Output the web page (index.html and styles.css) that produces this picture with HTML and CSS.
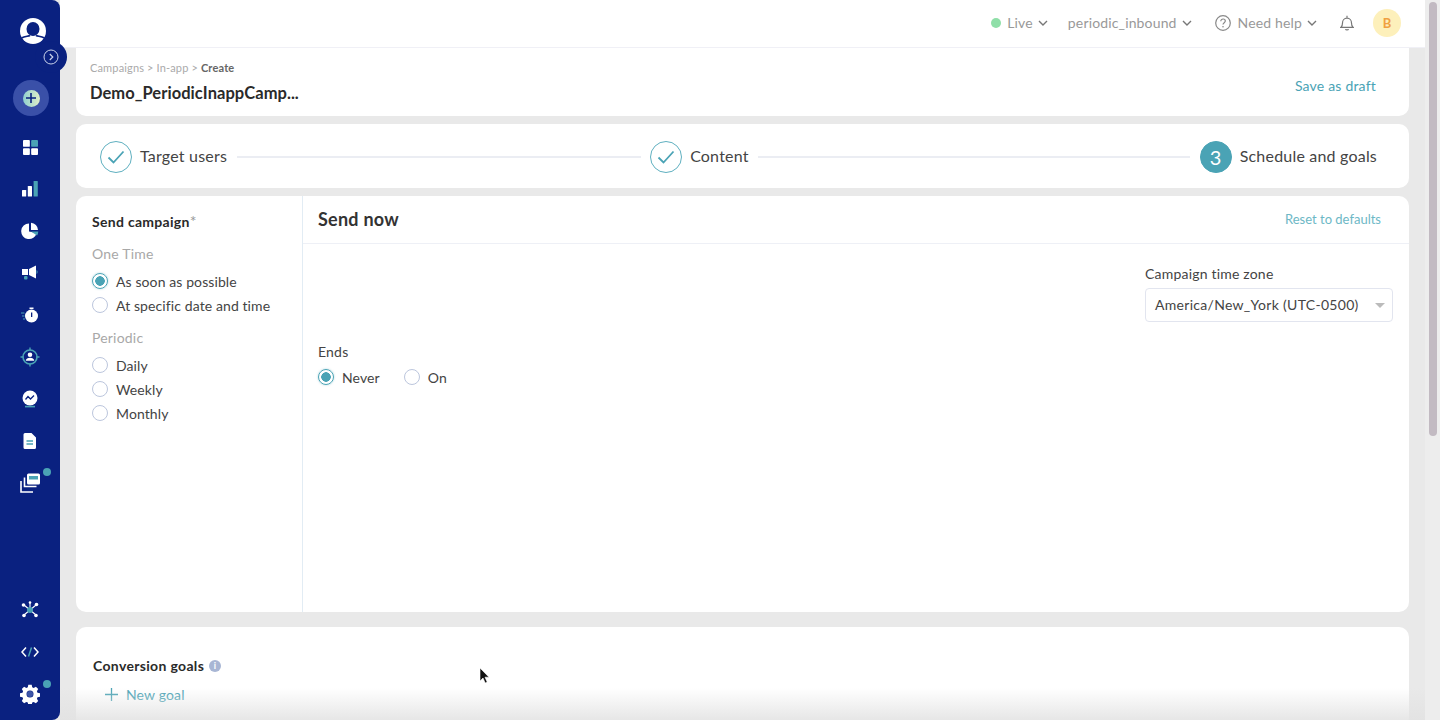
FILE: index.html
```html
<!DOCTYPE html>
<html lang="en">
<head>
  <meta charset="UTF-8">
  <title>Create campaign</title>
  <link rel="stylesheet" href="styles.css">
</head>
<body>
  <div class="app">
    <!-- Left navigation -->
    <aside class="sidebar">
      <div class="logo">
        <svg width="26" height="26" viewBox="0 0 26 26"><circle cx="13" cy="13" r="13" fill="#fff"/><ellipse cx="13" cy="11" rx="6.500" ry="7" fill="#0a2180"/><path d="M1.500 20c3.500-2 6.500-1.500 8.500-2.500M24.500 20c-3.500-2-6.500-1.500-8.500-2.500" fill="none" stroke="#0a2180" stroke-width="1.600"/></svg>
      </div>
      <div class="add-btn">
        <span class="add-inner">
          <svg width="10" height="10" viewBox="0 0 10 10"><path d="M5 0v10M0 5h10" stroke="#0a2180" stroke-width="1.600"/></svg>
        </span>
      </div>
      <nav class="nav-list">
        <a class="nav-item">
          <svg width="15" height="15" viewBox="0 0 16 16"><rect width="7.300" height="7.300" rx="1" fill="#fff"/><rect x="8.700" width="7.300" height="7.300" rx="1" fill="#4aa3b5"/><rect y="8.700" width="7.300" height="7.300" rx="1" fill="#fff"/><rect x="8.700" y="8.700" width="7.300" height="7.300" rx="1" fill="#fff"/></svg>
        </a>
        <a class="nav-item">
          <svg width="16" height="16" viewBox="0 0 16 16"><rect y="9" width="4.200" height="6.500" rx=".6" fill="#fff"/><rect x="5.800" y="5" width="4.200" height="10.500" rx=".6" fill="#fff"/><rect x="11.600" y="0" width="4.200" height="15.500" rx=".6" fill="#4aa3b5"/></svg>
        </a>
        <a class="nav-item">
          <svg width="18" height="18" viewBox="0 0 18 18"><path d="M8 1.500a7.800 7.800 0 1 0 7.600 9.500L8 9.500z" fill="#fff"/><path d="M10 .8V8l7 0A7.400 7.400 0 0 0 10 .8z" fill="#fff"/><path d="M10 9.500l7.300 0a7.400 7.400 0 0 1-1.300 4z" fill="#4aa3b5"/></svg>
        </a>
        <a class="nav-item">
          <svg width="18" height="18" viewBox="0 0 18 18"><rect x="1" y="5" width="6" height="6" fill="#fff"/><path d="M8 5l7-3.500v13L8 11z" fill="#fff"/><path d="M15.500 6c1.500.6 1.500 3.400 0 4z" fill="#4aa3b5"/><rect x="3" y="12" width="3.500" height="3.500" rx="1" fill="#4aa3b5"/></svg>
        </a>
        <a class="nav-item">
          <svg width="18" height="18" viewBox="0 0 18 18"><circle cx="10.500" cy="10" r="6.500" fill="#fff"/><rect x="8.500" y="1.500" width="4" height="1.500" fill="#fff"/><rect x="10" y="6.500" width="1.300" height="4.500" fill="#0a2180"/><path d="M0 7h3.500M1 10h2.500M2 13h2" stroke="#4aa3b5" stroke-width="1.200"/></svg>
        </a>
        <a class="nav-item">
          <svg width="20" height="20" viewBox="0 0 20 20"><circle cx="10" cy="10" r="7" fill="none" stroke="#4aa3b5" stroke-width="1.600"/><path d="M10 .5v3M10 16.500v3M.5 10h3M16.500 10h3" stroke="#4aa3b5" stroke-width="1.400"/><circle cx="10" cy="7.800" r="2.300" fill="#fff"/><path d="M5.800 13.800c0-2 2-3 4.200-3s4.200 1 4.200 3z" fill="#fff"/></svg>
        </a>
        <a class="nav-item">
          <svg width="18" height="18" viewBox="0 0 18 18"><circle cx="9" cy="8" r="7.500" fill="#fff"/><path d="M4.500 9.500l2.500-3 2.500 2.500 3.500-3.500" fill="none" stroke="#0a2180" stroke-width="1.300"/><rect x="4" y="15.800" width="10" height="1.600" fill="#4aa3b5"/></svg>
        </a>
        <a class="nav-item">
          <svg width="14" height="16" viewBox="0 0 14 16"><path d="M2 0h6.500L13 4.500V14.500a1.500 1.500 0 0 1-1.500 1.500h-9.500A1.500 1.500 0 0 1 .5 14.500V1.500A1.500 1.500 0 0 1 2 0z" fill="#fff"/><path d="M3.500 8h6.500M3.500 11h6.500" stroke="#4aa3b5" stroke-width="1.300"/></svg>
        </a>
        <a class="nav-item has-dot">
          <svg width="22" height="22" viewBox="0 0 22 22"><rect x="8" y="1.500" width="13" height="11" rx="1.500" fill="#fff"/><rect x="10" y="4" width="9" height="3.500" fill="#4aa3b5"/><path d="M5.500 5.500v9h12M2 9v11h12" fill="none" stroke="#fff" stroke-width="1.600"/></svg>
        </a>
      </nav>
      <div class="nav-bottom">
        <a class="nav-item">
          <svg width="18" height="18" viewBox="0 0 18 18"><path d="M9 9L3 4M9 9l6-5M9 9L3 14M9 9l6 5M9 9V1.500" stroke="#fff" stroke-width="1.100"/><circle cx="2.500" cy="4" r="1.800" fill="#fff"/><circle cx="15.500" cy="3.500" r="1.800" fill="#fff"/><circle cx="3" cy="14.500" r="1.800" fill="#fff"/><circle cx="15" cy="14.500" r="1.800" fill="#fff"/><circle cx="9" cy="1.500" r="1.300" fill="#fff"/><circle cx="9" cy="9" r="3" fill="#4aa3b5"/></svg>
        </a>
        <a class="nav-item">
          <svg width="18" height="12" viewBox="0 0 18 12"><path d="M5 1.500L1 6l4 4.500M13 1.500L17 6l-4 4.500" fill="none" stroke="#fff" stroke-width="1.500"/><path d="M7.500 10.500l3-9" stroke="#4aa3b5" stroke-width="1.500"/></svg>
        </a>
        <a class="nav-item has-dot gear">
          <svg width="20" height="20" viewBox="0 0 20 20"><path fill="#fff" fill-rule="evenodd" d="M8.300.8h3.400l.5 2.500 1.500.7 2.200-1.300 2.300 2.400-1.300 2.100.6 1.600 2.500.5v3.400l-2.500.5-.6 1.500 1.300 2.200-2.300 2.300-2.200-1.300-1.500.6-.5 2.500H8.300l-.5-2.500-1.500-.6-2.200 1.300-2.300-2.300 1.300-2.200-.6-1.500-2.500-.5V9.300l2.500-.5.6-1.600-1.300-2.100 2.300-2.400 2.200 1.300 1.500-.7zM10 6.500a3.500 3.500 0 1 0 0 7 3.500 3.500 0 0 0 0-7z"/><circle cx="10" cy="10" r="3" fill="#3d55a8"/></svg>
        </a>
      </div>
    </aside>

    <button class="nav-toggle">
      <svg width="16" height="16" viewBox="0 0 16 16"><circle cx="8" cy="8" r="7" fill="none" stroke="#c9d2ea" stroke-width="1"/><path d="M6.800 5l3 3-3 3" fill="none" stroke="#c9d2ea" stroke-width="1.200"/></svg>
    </button>

    <div class="main">
      <header class="topbar">
        <div class="top-item live"><span class="live-dot"></span>Live<svg class="chev" width="10" height="6" viewBox="0 0 10 6"><path d="M1 1l4 4 4-4" fill="none" stroke="#777" stroke-width="1.400"/></svg></div>
        <div class="top-item workspace">periodic_inbound<svg class="chev" width="10" height="6" viewBox="0 0 10 6"><path d="M1 1l4 4 4-4" fill="none" stroke="#777" stroke-width="1.400"/></svg></div>
        <div class="top-item help">
          <svg width="16" height="16" viewBox="0 0 16 16"><circle cx="8" cy="8" r="7.300" fill="none" stroke="#888" stroke-width="1.200"/><path d="M5.800 6.200c0-1.400 1-2.200 2.300-2.200s2.200.8 2.200 2c0 1.700-2.300 1.700-2.300 3.600" fill="none" stroke="#888" stroke-width="1.200"/><circle cx="8" cy="11.800" r=".8" fill="#888"/></svg>
          Need help<svg class="chev" width="10" height="6" viewBox="0 0 10 6"><path d="M1 1l4 4 4-4" fill="none" stroke="#777" stroke-width="1.400"/></svg>
        </div>
        <svg class="bell" width="14" height="16" viewBox="0 0 14 16"><path d="M1 12.300c1.200-1 1.500-2 1.500-4.300 0-2.700 1.800-4.800 4.500-4.800s4.500 2.100 4.500 4.800c0 2.300.3 3.300 1.500 4.300z" fill="none" stroke="#777" stroke-width="1.200"/><path d="M7 .8v2M5.500 14.200c.3 1 2.700 1 3 0" fill="none" stroke="#777" stroke-width="1.200"/></svg>
        <div class="avatar">B</div>
      </header>

      <div class="content">
        <section class="card title-card">
          <div>
            <div class="crumbs">Campaigns &gt; In-app &gt; <b>Create</b></div>
            <div class="camp-name">Demo_PeriodicInappCamp...</div>
          </div>
          <a class="draft-link">Save as draft</a>
        </section>

        <section class="card stepper">
          <div class="step">
            <span class="step-circle"><svg width="18" height="14" viewBox="0 0 18 14"><path d="M1.500 7.500l5 5L16.500 1.500" fill="none" stroke="#4aa3b5" stroke-width="1.800"/></svg></span>
            <span class="step-label">Target users</span>
          </div>
          <div class="step-line line-a"></div>
          <div class="step">
            <span class="step-circle"><svg width="18" height="14" viewBox="0 0 18 14"><path d="M1.500 7.500l5 5L16.500 1.500" fill="none" stroke="#4aa3b5" stroke-width="1.800"/></svg></span>
            <span class="step-label">Content</span>
          </div>
          <div class="step-line line-b"></div>
          <div class="step">
            <span class="step-circle current">3</span>
            <span class="step-label">Schedule and goals</span>
          </div>
        </section>

        <section class="card schedule">
          <div class="send-col">
            <div class="send-title">Send campaign<span class="star">*</span></div>
            <div class="group-label">One Time</div>
            <label class="radio on">As soon as possible</label>
            <label class="radio">At specific date and time</label>
            <div class="group-label second">Periodic</div>
            <label class="radio">Daily</label>
            <label class="radio">Weekly</label>
            <label class="radio">Monthly</label>
          </div>
          <div class="sched-col">
            <div class="sched-head">
              <h2>Send now</h2>
              <a class="reset-link">Reset to defaults</a>
            </div>
            <div class="sched-body">
              <div class="tz-wrap">
                <div class="tz-label">Campaign time zone</div>
                <div class="tz-select">America/New_York (UTC-0500)<span class="caret"></span></div>
              </div>
              <div class="ends-label">Ends</div>
              <div class="ends-row">
                <label class="radio on">Never</label>
                <label class="radio">On</label>
              </div>
            </div>
          </div>
        </section>

        <section class="card goals">
          <div class="goals-title">Conversion goals <span class="info">i</span></div>
          <a class="new-goal">
            <svg width="13" height="13" viewBox="0 0 13 13"><path d="M6.500 0v13M0 6.500h13" stroke="#4aa3b5" stroke-width="1.300"/></svg>
            New goal
          </a>
        </section>
      </div>
    </div>

    <div class="scroll-track"><div class="scroll-thumb"></div></div>
    <div class="bottom-fade"></div>
    <svg class="cursor" width="12" height="18" viewBox="0 0 12 18"><path d="M1 1v13l3-3 2.200 5 2-1-2.200-4.800H10z" fill="#111" stroke="#fff" stroke-width=".6"/></svg>
  </div>
</body>
</html>
```
FILE: styles.css
```css
*, *::before, *::after {
  box-sizing: border-box;
}

html, body {
  margin: 0;
  height: 100%;
  overflow: hidden;
}

body {
  font-family: Lato, Arial, sans-serif;
  font-size: 14px;
  color: #333;
  background: #e9e9e9;
}

.app {
  position: relative;
  display: flex;
  width: 1440px;
  height: 720px;
  overflow: hidden;
}

/* Sidebar */

.sidebar {
  width: 60px;
  height: 720px;
  flex-shrink: 0;
  display: flex;
  flex-direction: column;
  align-items: center;
  background: #0a2180;
  border-radius: 0 8px 8px 0;
}

.logo {
  height: 26px;
  margin-top: 18px;
  margin-left: 5px;
}

.add-btn {
  width: 36px;
  height: 36px;
  margin-top: 36px;
  margin-left: 2px;
  display: flex;
  align-items: center;
  justify-content: center;
  border-radius: 50%;
  background: #3a50a8;
}

.add-inner {
  width: 17px;
  height: 17px;
  display: flex;
  align-items: center;
  justify-content: center;
  border-radius: 50%;
  background: linear-gradient(90deg, #8fd0cf, #dfeec8);
}

.nav-list {
  margin-top: 10px;
  display: flex;
  flex-direction: column;
  flex: 1;
}

.nav-item {
  position: relative;
  width: 60px;
  height: 42px;
  display: flex;
  align-items: center;
  justify-content: center;
}

.has-dot::after {
  content: "";
  position: absolute;
  top: 6px;
  right: 9px;
  width: 8px;
  height: 8px;
  border-radius: 50%;
  background: #4aa3b5;
}

.nav-bottom {
  padding-bottom: 5px;
}

.gear::after {
  top: 7px;
}

.nav-toggle {
  position: absolute;
  left: 35px;
  top: 41px;
  width: 32px;
  height: 32px;
  padding: 0;
  border: none;
  border-radius: 50%;
  background: #0a2180;
  display: flex;
  align-items: center;
  justify-content: center;
}

/* Main column */

.main {
  width: 1365px;
  flex-shrink: 0;
}

.topbar {
  height: 48px;
  display: flex;
  align-items: center;
  justify-content: flex-end;
  padding: 0 24px 2px 0;
  background: #fff;
  border-bottom: 1px solid #f0f0f6;
  color: #999;
}

.top-item {
  display: flex;
  align-items: center;
  letter-spacing: .15px;
}

.live {
  margin-right: 20px;
}

.workspace {
  margin-right: 23px;
}

.chev {
  margin-left: 5px;
}

.live-dot {
  width: 10px;
  height: 10px;
  margin-right: 6px;
  border-radius: 50%;
  background: #8fdfa8;
}

.help {
  margin-right: 23px;
}

.help svg:first-child {
  margin-right: 7px;
}

.bell {
  margin-right: 19px;
}

.avatar {
  width: 28px;
  height: 28px;
  display: flex;
  align-items: center;
  justify-content: center;
  border-radius: 50%;
  background: #fdf0bb;
  color: #f0a040;
  font-size: 13px;
  font-weight: 700;
}

.content {
  padding: 0 16px;
}

.card {
  background: #fff;
  border-radius: 10px;
}

.title-card {
  height: 68px;
  display: flex;
  align-items: center;
  justify-content: space-between;
  padding: 0 33px 1px 14px;
  border-radius: 0 0 10px 10px;
}

.crumbs {
  font-size: 11px;
  color: #aaa;
  letter-spacing: .15px;
}

.crumbs b {
  color: #666;
  font-weight: 700;
}

.camp-name {
  margin-top: 9px;
  font-size: 16.500px;
  font-weight: 700;
  color: #2a2a2a;
  letter-spacing: .05px;
}

.draft-link {
  margin-top: 7px;
  font-size: 14px;
  color: #4aa3b5;
  letter-spacing: .2px;
}

.stepper {
  height: 64px;
  margin-top: 8px;
  display: flex;
  align-items: center;
  padding: 0 32px 0 24px;
}

.step {
  display: flex;
  align-items: center;
  gap: 8px;
  font-size: 16px;
  color: #444;
  letter-spacing: .2px;
}

.step-label {
  margin-bottom: 2px;
}

.step-circle {
  width: 32px;
  height: 32px;
  margin-top: 2px;
  display: flex;
  align-items: center;
  justify-content: center;
  border: 1.500px solid #5fb0c0;
  border-radius: 50%;
}

.step-circle.current {
  background: #4aa3b5;
  border-color: #4aa3b5;
  color: #fff;
  font-size: 20px;
}

.step-line {
  height: 2px;
  margin-top: 2px;
  background: #ebedf3;
}

.line-a {
  flex: 405;
  margin-left: 10px;
  margin-right: 9px;
}

.line-b {
  flex: 433;
  margin-left: 9px;
  margin-right: 10px;
}

.schedule {
  height: 416px;
  margin-top: 8px;
  display: flex;
}

.send-col {
  width: 227px;
  padding: 15px 16px;
  border-right: 1px solid #e2ecf4;
}

.send-title {
  font-weight: 700;
  color: #2a2a2a;
  line-height: 20px;
  letter-spacing: .3px;
}

.star {
  color: #999;
  font-weight: 400;
  font-size: 16px;
}

.group-label {
  margin-top: 12px;
  color: #a8a8a8;
  line-height: 20px;
  margin-bottom: 5px;
  letter-spacing: .2px;
}

.group-label.second {
  margin-top: 11px;
}

.radio {
  display: flex;
  align-items: center;
  gap: 8px;
  height: 24px;
  color: #444;
  letter-spacing: .1px;
}

.radio::before {
  content: "";
  width: 16px;
  height: 16px;
  flex-shrink: 0;
  border: 1px solid #bcc6dd;
  border-radius: 50%;
  background: #fff;
}

.radio.on::before {
  border-color: #4aa3b5;
  background: radial-gradient(circle, #4aa3b5 0 4.500px, #fff 5px);
  box-shadow: 0 0 2px rgba(74, 163, 181, .5);
}

.sched-col {
  flex: 1;
  min-width: 0;
}

.sched-head {
  height: 48px;
  display: flex;
  align-items: center;
  justify-content: space-between;
  padding: 0 28px 2px 15px;
  border-bottom: 1px solid #eef0f6;
}

.sched-head h2 {
  margin: 0;
  font-size: 18px;
  font-weight: 700;
  color: #333;
  letter-spacing: .25px;
}

.reset-link {
  font-size: 13px;
  color: #6db8c6;
}

.sched-body {
  padding: 22px 16px 0 15px;
}

.tz-wrap {
  width: 248px;
  margin-left: auto;
}

.tz-label {
  line-height: 16px;
  color: #444;
  letter-spacing: .2px;
}

.tz-select {
  position: relative;
  height: 34px;
  margin-top: 6px;
  padding: 0 0 2px 9px;
  display: flex;
  align-items: center;
  border: 1px solid #e2e5ef;
  border-radius: 4px;
  color: #444;
  letter-spacing: .3px;
}

.caret {
  position: absolute;
  right: 7px;
  top: 14px;
  border-left: 5px solid transparent;
  border-right: 5px solid transparent;
  border-top: 5px solid #bbb;
}

.ends-label {
  margin-top: 22px;
  line-height: 16px;
  color: #444;
  letter-spacing: .2px;
}

.ends-row {
  margin-top: 5px;
  display: flex;
  gap: 24px;
}

.goals {
  height: 100px;
  margin-top: 15px;
  padding: 30px 17px 0;
}

.goals-title {
  font-weight: 700;
  color: #2a2a2a;
  line-height: 18px;
  letter-spacing: .33px;
  display: flex;
  align-items: center;
  gap: 5px;
}

.info {
  width: 12px;
  height: 12px;
  display: flex;
  align-items: center;
  justify-content: center;
  border-radius: 50%;
  background: #a8b6d4;
  color: #fff;
  font-size: 9px;
}

.new-goal {
  margin: 11px 0 0 12px;
  display: flex;
  align-items: center;
  gap: 8px;
  color: #4aa3b5;
  letter-spacing: .15px;
}

/* Scrollbar and overlays */

.scroll-track {
  width: 15px;
  height: 720px;
  flex-shrink: 0;
  background: #ededed;
  padding: 2px 3px 0 4px;
}

.scroll-thumb {
  height: 434px;
  border-radius: 4px;
  background: #c2bac2;
}

.bottom-fade {
  position: absolute;
  left: 60px;
  bottom: 0;
  width: 1365px;
  height: 32px;
  background: linear-gradient(rgba(226, 226, 226, 0), rgba(226, 226, 226, .85));
}

.cursor {
  position: absolute;
  left: 479px;
  top: 667px;
}
```
